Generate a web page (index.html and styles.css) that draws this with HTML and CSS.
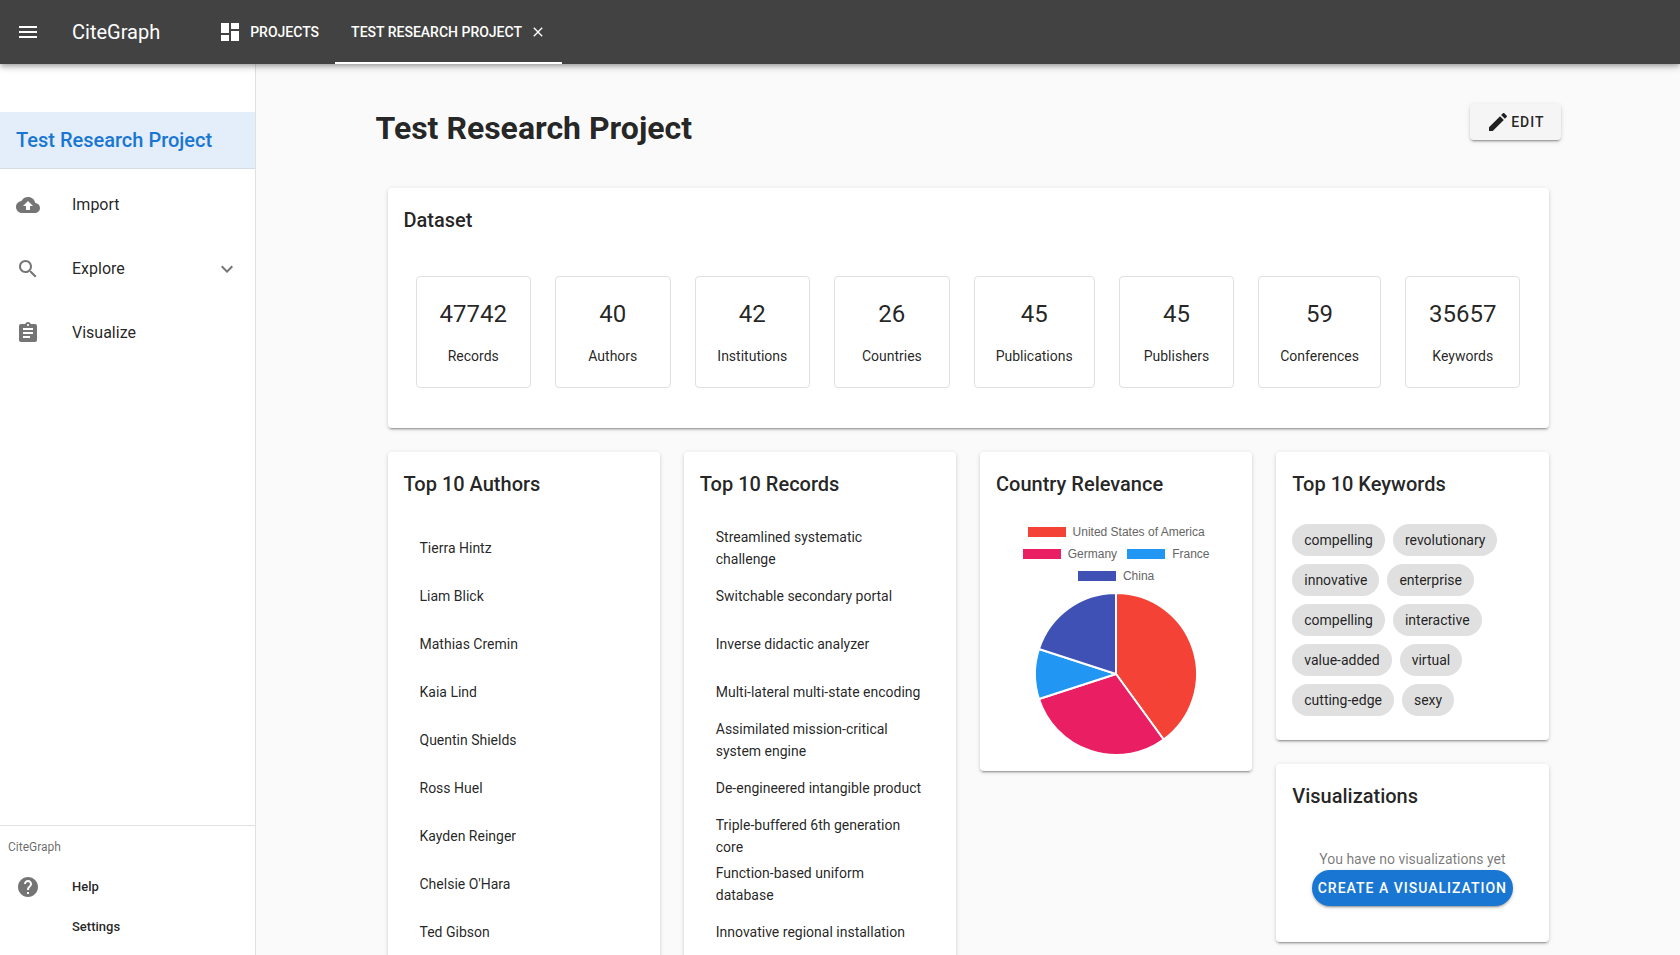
FILE: index.html
```html
<!DOCTYPE html>
<html lang="en">
<head>
<meta charset="utf-8">
<title>CiteGraph</title>
<link rel="stylesheet" href="styles.css">
</head>
<body class="app">
<header class="appbar">
  <button class="menu-button" aria-label="Menu"><svg class="icon" viewBox="0 0 24 24"><path d="M3,6H21V8H3V6M3,11H21V13H3V11M3,16H21V18H3V16Z"/></svg></button>
  <div class="brand">CiteGraph</div>
  <nav class="tabs">
    <a class="tab" href="#projects"><svg class="icon" viewBox="0 0 24 24"><path d="M13,3V9H21V3M13,21H21V11H13M3,21H11V15H3M3,13H11V3H3V13Z"/></svg><span>PROJECTS</span></a>
    <a class="tab tab-active" href="#project"><span>TEST RESEARCH PROJECT</span><svg class="icon icon-small" viewBox="0 0 24 24"><path d="M19,6.41L17.59,5L12,10.59L6.41,5L5,6.41L10.59,12L5,17.59L6.41,19L12,13.41L17.59,19L19,17.59L13.41,12L19,6.41Z"/></svg></a>
  </nav>
</header>
<div class="shell">
  <aside class="drawer">
    <a class="drawer-title" href="#project">Test Research Project</a>
    <nav class="drawer-nav">
      <a class="nav-item" href="#import"><svg class="icon" viewBox="0 0 24 24"><path d="M19.35 10.04C18.67 6.59 15.64 4 12 4 9.11 4 6.6 5.64 5.35 8.04 2.34 8.36 0 10.91 0 14c0 3.31 2.69 6 6 6h13c2.76 0 5-2.24 5-5 0-2.64-2.05-4.78-4.65-4.96zM14 13v4h-4v-4H7l5-5 5 5h-3z"/></svg><span>Import</span></a>
      <a class="nav-item" href="#explore"><svg class="icon" viewBox="0 0 24 24"><path d="M15.5 14h-.79l-.28-.27C15.41 12.59 16 11.11 16 9.5 16 5.91 13.09 3 9.5 3S3 5.91 3 9.5 5.91 16 9.5 16c1.61 0 3.09-.59 4.23-1.57l.27.28v.79l5 4.99L20.49 19l-4.99-5zm-6 0C7.01 14 5 11.99 5 9.5S7.01 5 9.5 5 14 7.01 14 9.5 11.99 14 9.5 14z"/></svg><span class="grow">Explore</span><svg class="icon" viewBox="0 0 24 24"><path d="M7.41,8.58L12,13.17L16.59,8.58L18,10L12,16L6,10L7.41,8.58Z"/></svg></a>
      <a class="nav-item" href="#visualize"><svg class="icon" viewBox="0 0 24 24"><path d="M19 3h-4.18C14.4 1.84 13.3 1 12 1c-1.3 0-2.4.84-2.82 2H5c-1.1 0-2 .9-2 2v14c0 1.1.9 2 2 2h14c1.1 0 2-.9 2-2V5c0-1.1-.9-2-2-2zm-7 0c.55 0 1 .45 1 1s-.45 1-1 1-1-.45-1-1 .45-1 1-1zm2 14H7v-2h7v2zm3-4H7v-2h10v2zm0-4H7V7h10v2z"/></svg><span>Visualize</span></a>
    </nav>
    <div class="drawer-footer">
      <div class="subheader">CiteGraph</div>
      <a class="footer-item" href="#help"><svg class="icon" viewBox="0 0 24 24"><path d="M12 2C6.48 2 2 6.48 2 12s4.48 10 10 10 10-4.48 10-10S17.52 2 12 2zm1 17h-2v-2h2v2zm2.07-7.75l-.9.92C13.45 12.9 13 13.5 13 15h-2v-.5c0-1.1.45-2.1 1.17-2.83l1.24-1.26c.37-.36.59-.86.59-1.41 0-1.1-.9-2-2-2s-2 .9-2 2H8c0-2.21 1.79-4 4-4s4 1.79 4 4c0 .88-.36 1.68-.93 2.25z"/></svg><span>Help</span></a>
      <a class="footer-item footer-item-plain" href="#settings">Settings</a>
    </div>
  </aside>
  <main class="main">
    <div class="container">
      <div class="page-head">
        <h1 class="page-title">Test Research Project</h1>
        <button class="edit-button"><svg class="icon" viewBox="0 0 24 24"><path d="M20.71,7.04C21.1,6.65 21.1,6 20.71,5.63L18.37,3.29C18,2.9 17.35,2.9 16.96,3.29L15.12,5.12L18.87,8.87M3,17.25V21H6.75L17.81,9.93L14.06,6.18L3,17.25Z"/></svg><span>EDIT</span></button>
      </div>
      <div class="board">
        <section class="card dataset">
          <h2 class="card-title">Dataset</h2>
          <div class="stats">
            <div class="stat"><div class="stat-value">47742</div><div class="stat-label">Records</div></div>
            <div class="stat"><div class="stat-value">40</div><div class="stat-label">Authors</div></div>
            <div class="stat"><div class="stat-value">42</div><div class="stat-label">Institutions</div></div>
            <div class="stat"><div class="stat-value">26</div><div class="stat-label">Countries</div></div>
            <div class="stat"><div class="stat-value">45</div><div class="stat-label">Publications</div></div>
            <div class="stat"><div class="stat-value">45</div><div class="stat-label">Publishers</div></div>
            <div class="stat"><div class="stat-value">59</div><div class="stat-label">Conferences</div></div>
            <div class="stat"><div class="stat-value">35657</div><div class="stat-label">Keywords</div></div>
          </div>
        </section>
        <div class="columns">
          <section class="card">
            <h2 class="card-title">Top 10 Authors</h2>
            <ul class="list">
              <li class="list-item">Tierra Hintz</li>
              <li class="list-item">Liam Blick</li>
              <li class="list-item">Mathias Cremin</li>
              <li class="list-item">Kaia Lind</li>
              <li class="list-item">Quentin Shields</li>
              <li class="list-item">Ross Huel</li>
              <li class="list-item">Kayden Reinger</li>
              <li class="list-item">Chelsie O'Hara</li>
              <li class="list-item">Ted Gibson</li>
            </ul>
          </section>
          <section class="card">
            <h2 class="card-title">Top 10 Records</h2>
            <ul class="list">
              <li class="list-item">Streamlined systematic challenge</li>
              <li class="list-item">Switchable secondary portal</li>
              <li class="list-item">Inverse didactic analyzer</li>
              <li class="list-item">Multi-lateral multi-state encoding</li>
              <li class="list-item">Assimilated mission-critical system engine</li>
              <li class="list-item">De-engineered intangible product</li>
              <li class="list-item">Triple-buffered 6th generation core</li>
              <li class="list-item">Function-based uniform database</li>
              <li class="list-item">Innovative regional installation</li>
            </ul>
          </section>
          <section class="card">
            <h2 class="card-title">Country Relevance</h2>
            <div class="chart">
              <ul class="legend">
                <li class="legend-item"><span class="swatch swatch-red"></span>United States of America</li>
                <li class="legend-item"><span class="swatch swatch-pink"></span>Germany</li>
                <li class="legend-item"><span class="swatch swatch-blue"></span>France</li>
                <li class="legend-item"><span class="swatch swatch-indigo"></span>China</li>
              </ul>
              <svg class="pie" viewBox="-81 -81 162 162" role="img" aria-label="Country relevance">
                <path fill="#f44336" d="M0,0L0,-81A81,81 0 0 1 47.61,65.53Z"/>
                <path fill="#e91e63" d="M0,0L47.61,65.53A81,81 0 0 1 -77.04,25.03Z"/>
                <path fill="#2196f3" d="M0,0L-77.04,25.03A81,81 0 0 1 -77.04,-25.03Z"/>
                <path fill="#3f51b5" d="M0,0L-77.04,-25.03A81,81 0 0 1 0,-81Z"/>
              </svg>
            </div>
          </section>
          <div class="stack">
            <section class="card">
              <h2 class="card-title">Top 10 Keywords</h2>
              <div class="chips">
                <div class="chip-row"><span class="chip">compelling</span><span class="chip">revolutionary</span></div>
                <div class="chip-row"><span class="chip">innovative</span><span class="chip">enterprise</span></div>
                <div class="chip-row"><span class="chip">compelling</span><span class="chip">interactive</span></div>
                <div class="chip-row"><span class="chip">value-added</span><span class="chip">virtual</span></div>
                <div class="chip-row"><span class="chip">cutting-edge</span><span class="chip">sexy</span></div>
              </div>
            </section>
            <section class="card">
              <h2 class="card-title">Visualizations</h2>
              <div class="empty">
                <p class="empty-text">You have no visualizations yet</p>
                <button class="create-button">CREATE A VISUALIZATION</button>
              </div>
            </section>
          </div>
        </div>
      </div>
    </div>
  </main>
</div>
</body>
</html>
```

FILE: styles.css
```css
* { box-sizing: border-box; }

.app {
  margin: 0;
  height: 100vh;
  display: flex;
  flex-direction: column;
  overflow: hidden;
  background: #fafafa;
  color: rgba(0, 0, 0, 0.87);
  font: 14px/22px Roboto, sans-serif;
}

a { color: inherit; text-decoration: none; }
button { font: inherit; color: inherit; border: 0; padding: 0; background: none; cursor: pointer; }
ul { list-style: none; margin: 0; padding: 0; }

.icon { width: 24px; height: 24px; flex: none; fill: currentColor; display: block; }
.icon-small { width: 16px; height: 16px; }
.grow { flex: 1; }

/* App bar */
.appbar {
  position: relative;
  z-index: 1;
  flex: none;
  display: flex;
  align-items: center;
  height: 64px;
  padding-left: 16px;
  background: #424242;
  color: #fff;
  box-shadow: 0 2px 4px -1px rgba(0, 0, 0, 0.2), 0 4px 5px rgba(0, 0, 0, 0.14), 0 1px 10px rgba(0, 0, 0, 0.12);
}
.brand { margin-left: 32px; font-size: 20px; line-height: 32px; }
.tabs { display: flex; height: 100%; margin-left: 42px; }
.tab {
  display: flex;
  align-items: center;
  gap: 8px;
  padding: 2px 16px 0;
  border-bottom: 2px solid transparent;
  font-weight: 500;
}
.tab-active { border-color: #fff; }

/* Drawer */
.shell { flex: 1; min-height: 0; display: flex; }
.drawer {
  flex: none;
  width: 256px;
  display: flex;
  flex-direction: column;
  padding-top: 48px;
  background: #fff;
  border-right: 1px solid #e0e0e0;
}
.drawer-title {
  padding: 12px 16px;
  border-bottom: 1px solid #d4dbe4;
  background: #e3eefa;
  color: #1976d2;
  font-size: 20px;
  font-weight: 500;
  line-height: 32px;
}
.drawer-nav { flex: 1; padding-top: 4px; }
.nav-item {
  display: flex;
  align-items: center;
  gap: 32px;
  height: 64px;
  padding: 0 16px;
  font-size: 16px;
  line-height: 24px;
}
.nav-item .icon, .footer-item .icon { color: #757575; }
.drawer-footer { padding: 8px 0; border-top: 1px solid #e0e0e0; }
.subheader { padding: 3px 8px 10px; font-size: 12px; color: rgba(0, 0, 0, 0.6); line-height: 20px; }
.footer-item {
  display: flex;
  align-items: center;
  gap: 32px;
  height: 40px;
  padding: 0 16px;
  font-size: 13px;
  font-weight: 500;
}
.footer-item-plain { padding-left: 72px; }

/* Main */
.main { flex: 1; min-width: 0; overflow: hidden; padding-top: 40px; }
.container { max-width: 1185px; margin: 0 auto; }
.page-head { display: flex; justify-content: space-between; align-items: flex-start; }
.page-title { margin: 0; font-size: 32px; line-height: 48px; font-weight: 700; }
.edit-button {
  display: flex;
  align-items: center;
  gap: 1px;
  height: 36px;
  padding: 0 16px;
  border-radius: 4px;
  background: #f5f5f5;
  font-weight: 500;
  letter-spacing: 1px;
  box-shadow: 0 3px 1px -2px rgba(0, 0, 0, 0.2), 0 2px 2px rgba(0, 0, 0, 0.14), 0 1px 5px rgba(0, 0, 0, 0.12);
}

.board { display: flex; flex-direction: column; gap: 24px; padding: 36px 12px 24px; }
.card {
  background: #fff;
  border-radius: 4px;
  box-shadow: 0 3px 1px -2px rgba(0, 0, 0, 0.2), 0 2px 2px rgba(0, 0, 0, 0.14), 0 1px 5px rgba(0, 0, 0, 0.12);
}
.card-title { margin: 0; padding: 16px; font-size: 20px; line-height: 32px; font-weight: 500; }

.stats { display: flex; gap: 24px; padding: 24px 28px 40px; }
.stat {
  flex: 1 1 0;
  padding: 20px 21px;
  border: 1px solid #e0e0e0;
  border-radius: 4px;
  text-align: center;
}
.stat-value { margin-bottom: 14px; font-size: 24px; line-height: 34px; }

.columns { display: grid; grid-template-columns: repeat(4, minmax(0, 1fr)); gap: 24px; align-items: start; }
.stack { display: flex; flex-direction: column; gap: 24px; }

.list { padding: 8px 16px 24px; }
.list-item { display: flex; align-items: center; height: 48px; padding: 0 16px; }

/* Chart */
.chart { padding: 5px 16px 16px; }
.legend {
  display: flex;
  flex-wrap: wrap;
  justify-content: center;
  column-gap: 10px;
  padding: 0 16px;
  margin-bottom: 6px;
  font: 12px/22px "Liberation Sans", Arial, sans-serif;
  color: #666;
}
.legend-item { display: flex; align-items: center; gap: 7px; }
.swatch { width: 38px; height: 10px; }
.swatch-red { background: #f44336; }
.swatch-pink { background: #e91e63; }
.swatch-blue { background: #2196f3; }
.swatch-indigo { background: #3f51b5; }
.pie { display: block; width: 162px; height: 162px; margin: 0 auto; }
.pie path { stroke: #fff; stroke-width: 2; stroke-linejoin: round; }

/* Keywords */
.chips { display: flex; flex-direction: column; gap: 8px; padding: 8px 16px 24px; }
.chip-row { display: flex; gap: 8px; }
.chip { padding: 5px 12px; border-radius: 16px; background: #e0e0e0; }

/* Visualizations */
.empty { display: flex; flex-direction: column; padding: 20px 36px 36px; }
.empty-text { margin: 0; text-align: center; color: rgba(0, 0, 0, 0.54); }
.create-button {
  height: 36px;
  border-radius: 18px;
  background: #1976d2;
  color: #fff;
  font-weight: 500;
  letter-spacing: 1px;
  white-space: nowrap;
  box-shadow: 0 3px 1px -2px rgba(0, 0, 0, 0.2), 0 2px 2px rgba(0, 0, 0, 0.14), 0 1px 5px rgba(0, 0, 0, 0.12);
}
```
